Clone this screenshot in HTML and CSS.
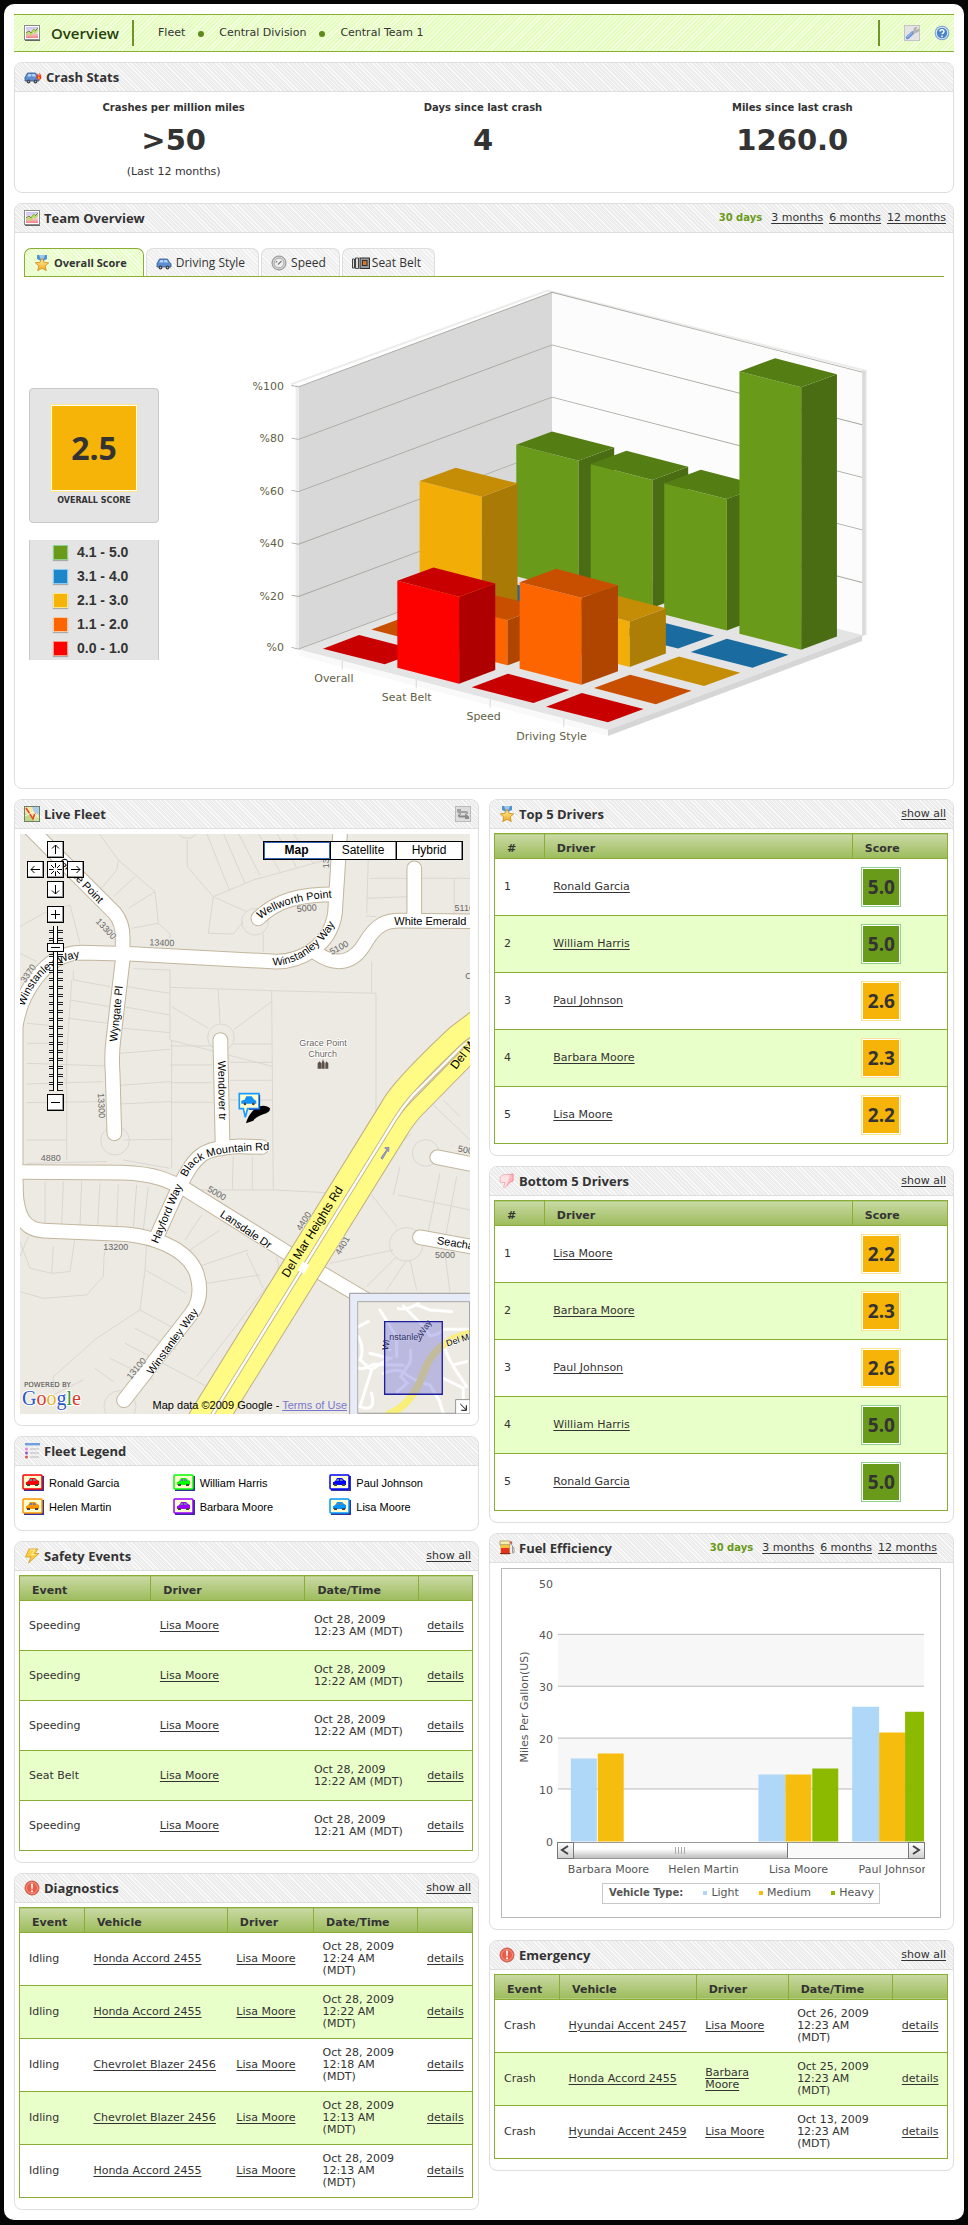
FILE: index.html
```html
<!DOCTYPE html>
<html lang="en">
<head>
<meta charset="utf-8">
<title>Fleet Overview</title>
<link rel="stylesheet" href="styles.css">
</head>
<body>
<svg class="sprite" aria-hidden="true">
  <defs>
    <linearGradient id="g-chart" x1="0" y1="0" x2="0" y2="1"><stop offset="0" stop-color="#c9c4fb"/><stop offset=".5" stop-color="#f3dcec"/><stop offset="1" stop-color="#f77f84"/></linearGradient>
    <linearGradient id="g-star" x1="0" y1="0" x2="0" y2="1"><stop offset="0" stop-color="#fff2a0"/><stop offset="1" stop-color="#f3a81c"/></linearGradient>
  </defs>
  <symbol id="i-chart" viewBox="0 0 16 16"><rect x=".5" y=".5" width="15" height="14" fill="#fff" stroke="#8a8a8a"/><rect x="2" y="2" width="12" height="11" fill="url(#g-chart)"/><path d="M2 8l3-2 2 2 3-4 1 2 3-3" fill="none" stroke="#5c8a22" stroke-width="1"/><path d="M2 10l3-2 2 2 3-5 1 3 3-3" fill="none" stroke="#b6dd5a" stroke-width="1.400"/><path d="M1 15.500h15" stroke="#666"/></symbol>
  <symbol id="i-car" viewBox="0 0 16 16"><path d="M1 8.500L3.500 4h8l2 3.500 1.500 1v3.500H1z" fill="#5b8ed0" stroke="#2d568f" stroke-width=".8"/><path d="M4.500 5h2.800v2.500H3.200zM8.200 5h2.600l1.300 2.500H8.200z" fill="#b8d4f4"/><circle cx="4.500" cy="12.500" r="1.900" fill="#444"/><circle cx="11.500" cy="12.500" r="1.900" fill="#444"/><circle cx="4.500" cy="12.500" r=".7" fill="#bbb"/><circle cx="11.500" cy="12.500" r=".7" fill="#bbb"/></symbol>
  <symbol id="i-crash" viewBox="0 0 18 16"><use href="#i-car" width="16" height="16"/><path d="M13.500 10.500c-2.500-2 0-3.500 0-6 1.500 1 1 2.500 1.500 3 .6-1 .5-3 0-4 2 1.500 3.200 5 1.500 7z" fill="#f2321a"/><path d="M14.200 10c-1-1.500.5-1.800.5-3 1 1 1.300 2 .6 3z" fill="#ffb41f"/></symbol>
  <symbol id="i-medal" viewBox="0 0 16 16"><path d="M3 0h4v6L3 4zM9 0h4v4L9 6z" fill="#4f93cf"/><path d="M5 0h6L9 5H7z" fill="#9cc6ea"/><path d="M8 3l2 4.300 4.700.500-3.500 3.100 1.100 4.700L8 13.300l-4.300 2.300 1.100-4.700L1.300 7.800 6 7.300z" fill="url(#g-star)" stroke="#c98a1d" stroke-width=".8"/></symbol>
  <symbol id="i-gauge" viewBox="0 0 16 16"><circle cx="8" cy="8" r="7" fill="#d4d4d4" stroke="#8c8c8c"/><circle cx="8" cy="8" r="4.800" fill="#efefef" stroke="#aaa"/><path d="M7 9.500l3.500-3.500M5 7.500l1-1.500" stroke="#777" stroke-width="1.100"/></symbol>
  <symbol id="i-belt" viewBox="0 0 18 16"><path d="M.5 4v9h2V4zM3.500 3v10.500h3V3z" fill="#ddd" stroke="#444"/><rect x="8" y="3" width="9.500" height="10.500" fill="#999" stroke="#333"/><rect x="10.500" y="5.500" width="4.500" height="5" fill="#d6772a" stroke="#333"/></symbol>
  <symbol id="i-map" viewBox="0 0 16 16"><rect x=".5" y=".5" width="15" height="15" fill="#f4e9a6" stroke="#6d7f6a"/><path d="M8 1h7v8L10 6z" fill="#a9cdef"/><path d="M1 7l5 3 4 5H1z" fill="#bcd98a"/><path d="M9 15l3-4 3-1v5z" fill="#cfe59e"/><path d="M2 2l7 11 2-6" fill="none" stroke="#e0492c" stroke-width="1.600"/><path d="M1 10l8-4 6 6" fill="none" stroke="#fff" stroke-width=".8"/></symbol>
  <symbol id="i-thumb" viewBox="0 0 16 16"><path d="M2 3.500C3 1.500 5 1.500 7 1.500h4l3-.5v7l-3 1-3.500 4L5.500 15l-1-.500L6 9.500H2.500C.5 9.500.8 8 1.500 7.500.5 7 .8 5.800 1.600 5.500 1 4.800 1.200 3.800 2 3.500z" fill="#ffe3e4" stroke="#f6a9b2" stroke-width=".9"/><path d="M11 1.500l3-.5v7l-3 1-3.500 4" fill="#ffb9c1" stroke="#f27f90" stroke-width=".7"/></symbol>
  <symbol id="i-fuel" viewBox="0 0 16 16"><path d="M1 1h10v4H1z" fill="#f7eeb0" stroke="#a79663" stroke-width=".8"/><path d="M2 5h8.500v9H2z" fill="#e8311c" stroke="#972" stroke-width=".6"/><path d="M2 5h8.500v3H2z" fill="#f6c43c"/><path d="M1 13.500h10.500" stroke="#8e2b1b"/><path d="M11 3l2.500 3v6c0 2 1.500 1.500 1.500 0V8l-2-2" fill="none" stroke="#999"/><path d="M11.500 1.500l1.500 2" stroke="#d33" stroke-width="1.400"/></symbol>
  <symbol id="i-list" viewBox="0 0 16 16"><path d="M1 0h15v3H1z" fill="#6f9fdc"/><path d="M1 2.500h15" stroke="#b7d0f0"/><path d="M6 6h9M6 10h9M6 14h9" stroke="#bbb"/><circle cx="2.500" cy="6" r="1.500" fill="#e486dc"/><circle cx="2.500" cy="10" r="1.500" fill="#9656cc"/><circle cx="2.500" cy="14" r="1.500" fill="#d65c4c"/></symbol>
  <symbol id="i-bolt" viewBox="0 0 16 16"><path d="M5 1h9l-3.500 4.500H15L4.500 15l2.500-6H1.500z" fill="#f8cf45" stroke="#d99f21" stroke-width=".9"/><path d="M6 2h5L7.500 6.500H11" fill="none" stroke="#fdf0a8"/></symbol>
  <symbol id="i-alert" viewBox="0 0 16 16"><circle cx="8" cy="8" r="7" fill="#ea5c47" stroke="#c9604e"/><circle cx="8" cy="8" r="5.500" fill="none" stroke="#f7a596" stroke-width=".8"/><path d="M7 3.800h2l-.4 5.400H7.400z" fill="#fff"/><circle cx="8" cy="11.300" r="1.100" fill="#fff"/></symbol>
  <symbol id="i-wrench" viewBox="0 0 16 16"><rect x=".5" y=".5" width="15" height="15" fill="#e4e4e4" stroke="#c4c4c4"/><path d="M3.500 12.500l5-4.500" stroke="#6f95d8" stroke-width="3.600" stroke-linecap="round"/><path d="M3.200 12l4.500-4" stroke="#a9c4f0" stroke-linecap="round"/><path d="M8.500 8L10.500 6C9 3.800 11 2 12.800 2.600L11.500 4l.7 1.300 1.500-.1 1-1.200C15 6.500 13.200 7.800 11.500 7L9.500 9z" fill="#bdbdbd" stroke="#999" stroke-width=".7"/></symbol>
  <symbol id="i-help" viewBox="0 0 16 16"><circle cx="8" cy="8" r="6.800" fill="#d9e7f8" stroke="#7da3d4" stroke-width="1.100"/><circle cx="8" cy="8" r="5.200" fill="#4c82c6"/><path d="M6 6.600C6 4.300 10 4.300 10 6.500 10 8 8 8 8 9.300" fill="none" stroke="#fff" stroke-width="1.500"/><circle cx="8" cy="11.300" r=".9" fill="#fff"/></symbol>
  <symbol id="i-refresh" viewBox="0 0 16 16"><rect x=".5" y=".5" width="15" height="15" fill="#dcdcdc" stroke="#bbb"/><path d="M2 3h4v2h5c2 0 2 1 2 3h-2V7H6v2L2 6z" fill="#a0a0a0"/><path d="M14 13h-4v-1.500H5c-2 0-2-1-2-3h2v1h5V7.500l4 3z" fill="#8a8a8a"/></symbol>
  <symbol id="i-tag" viewBox="0 0 22 18"><path d="M2 2h20v15H2z" fill="#33339a"/><rect x="1" y="1" width="19" height="14" rx="1" fill="#ffffcf" stroke="currentColor" stroke-width="1.500"/><path d="M4 10V8h1l2-2 1-2h5l2 2 2 1v4H4z" fill="currentColor"/><path d="M8 5h2v2H7zM11 5h2l1 2h-3z" fill="#6f7fa8"/><path d="M5 10h3v2H5zM13 10h3v2h-3z" fill="#444"/></symbol>
</svg>

<div class="page">
  <header class="topbar">
    <h1 class="topbar-title"><svg class="icon"><use href="#i-chart"/></svg>Overview</h1>
    <ol class="crumbs"><li>Fleet</li><li>Central Division</li><li>Central Team 1</li></ol>
    <div class="topbar-tools">
      <button class="icon-btn" aria-label="Settings"><svg class="icon"><use href="#i-wrench"/></svg></button>
      <button class="icon-btn" aria-label="Help"><svg class="icon"><use href="#i-help"/></svg></button>
    </div>
  </header>

  <section class="panel">
    <div class="panel-head"><h2><svg class="icon icon-wide"><use href="#i-crash"/></svg>Crash Stats</h2></div>
    <div class="stats">
      <div class="stat"><h3>Crashes per million miles</h3><strong>&gt;50</strong><p>(Last 12 months)</p></div>
      <div class="stat"><h3>Days since last crash</h3><strong>4</strong></div>
      <div class="stat"><h3>Miles since last crash</h3><strong>1260.0</strong></div>
    </div>
  </section>

  <section class="panel">
    <div class="panel-head"><h2><svg class="icon"><use href="#i-chart"/></svg>Team Overview</h2>
      <nav class="ranges"><b>30 days</b><a href="#">3 months</a><a href="#">6 months</a><a href="#">12 months</a></nav></div>
    <div class="tabs">
      <button class="tab tab-on"><svg class="icon"><use href="#i-medal"/></svg>Overall Score</button>
      <button class="tab"><svg class="icon"><use href="#i-car"/></svg>Driving Style</button>
      <button class="tab"><svg class="icon"><use href="#i-gauge"/></svg>Speed</button>
      <button class="tab tab-tight"><svg class="icon icon-wide"><use href="#i-belt"/></svg>Seat Belt</button>
    </div>
    <div class="team">
      <aside class="team-side">
        <div class="overall"><div class="overall-score">2.5</div><div class="overall-label">OVERALL SCORE</div></div>
        <ul class="bands">
          <li><i class="swatch band5"></i>4.1 - 5.0</li>
          <li><i class="swatch band4"></i>3.1 - 4.0</li>
          <li><i class="swatch band3"></i>2.1 - 3.0</li>
          <li><i class="swatch band2"></i>1.1 - 2.0</li>
          <li><i class="swatch band1"></i>0.0 - 1.0</li>
        </ul>
      </aside>
      <svg class="chart3d" viewBox="240 280 660 500" role="img" aria-label="Score distribution by category">
        <g transform="translate(240 270) scale(.4209 .3333)">
          <path d="M120 343L730 62L1486 303V1097" fill="none" stroke="#ececec" stroke-width="6"/>
          <path d="M137 350L740 67V857L137 1140z" fill="#d8d8d8"/>
          <path d="M740 67L1478 307V1097L740 857z" fill="#fcfcfc"/>
          <path d="M1478 303h8v792l-8 5z" fill="#dadada"/>
          <path d="M130 346h7v794h-7z" fill="#ececec"/>
          <path d="M137 1140L740 857L1478 1097L873 1382z" fill="#e4e4e4"/>
          <path d="M873 1382L1478 1097V1115L873 1400z" fill="#d6d6d6"/>
          <path d="M137 1140L873 1382V1400L137 1158z" fill="#f9f9f9"/>
          <path d="M120 347l17 4L740 67L1478 307M120 505l17 4L740 225L1478 465M120 662l17 4L740 382L1478 623M120 820l17 4L740 540L1478 781M120 977l17 4L740 697L1478 939M120 1134l17 5L740 857" fill="none" stroke="#a9a9a2" stroke-width="2.500"/>
          <path d="M241 1175v25M417 1232v25M593 1290v25M768 1348v25" stroke="#ccc" stroke-width="2"/>
          <path d="M655 525L803 573V970L655 920z" fill="#6a9a1a"/><path d="M803 573L888 533V930L803 970z" fill="#4a6c12"/><path d="M655 525L740 485L888 533L803 573z" fill="#547d14"/>
          <path d="M832 583L979 631V1030L832 982z" fill="#6a9a1a"/><path d="M979 631L1064 591V975L979 1015z" fill="#4a6c12"/><path d="M832 583L917 543L1064 591L979 631z" fill="#547d14"/>
          <path d="M1007 641L1156 688V1083L1007 1035z" fill="#6a9a1a"/><path d="M1156 688L1241 648V1043L1156 1083z" fill="#4a6c12"/><path d="M1007 641L1094 600L1241 648L1156 688z" fill="#547d14"/>
          <path d="M1186 305L1333 352V1141L1186 1093z" fill="#6a9a1a"/><path d="M1333 352L1418 313V1101L1333 1141z" fill="#4a6c12"/><path d="M1186 305L1271 265L1418 313L1333 352z" fill="#547d14"/>
          <path d="M1070 1148L1156 1108L1303 1156L1217 1195zM893 1091L979 1051L1126 1098L1040 1137zM540 975L626 935L773 983L687 1022z" fill="#1a6ba0"/>
          <path d="M425 634L573 681V1080L425 1030z" fill="#f2ae06"/><path d="M573 681L658 641V1035L573 1080z" fill="#a97a05"/><path d="M425 634L511 594L658 641L573 681z" fill="#c48d05"/>
          <path d="M778 1008L925 1056V1193L778 1145z" fill="#f2ae06"/><path d="M925 1056L1011 1016V1152L925 1193z" fill="#ad7e06"/><path d="M778 1008L864 968L1011 1016L925 1056zM956 1202L1042 1161L1188 1210L1102 1250z" fill="#c48d05"/>
          <path d="M487 1004L634 1052V1188L487 1140z" fill="#fd6500"/><path d="M634 1052L720 1012V1147L634 1188z" fill="#b04500"/><path d="M487 1004L573 968L720 1012L634 1052zM310 1080L396 1040L543 1088L457 1128z" fill="#c94f00"/>
          <path d="M663 938L810 985V1246L663 1198z" fill="#fd6500"/><path d="M810 985L897 947V1206L810 1246z" fill="#b04500"/><path d="M663 938L750 898L897 947L810 985zM840 1256L926 1216L1072 1264L987 1305z" fill="#c94f00"/>
          <path d="M195 1138L281 1097L428 1145L342 1185z" fill="#c90000"/>
          <path d="M372 934L519 982V1243L372 1195z" fill="#fd0000"/><path d="M519 982L605 942V1202L519 1243z" fill="#ae0000"/><path d="M372 934L458 894L605 942L519 982zM549 1254L635 1213L781 1262L696 1301zM726 1312L811 1271L958 1319L873 1359z" fill="#c90000"/>
        </g>
        <g class="axis end"><text x="283" y="390">%100</text><text x="283" y="442">%80</text><text x="283" y="495">%60</text><text x="283" y="547">%40</text><text x="283" y="600">%20</text><text x="283" y="652">%0</text></g>
        <g class="axis mid"><text x="333" y="683">Overall</text><text x="406" y="702">Seat Belt</text><text x="483" y="721">Speed</text><text x="551" y="741">Driving Style</text></g>
      </svg>
    </div>
  </section>

  <div class="columns">
    <div class="column">
      <section class="panel">
        <div class="panel-head"><h2><svg class="icon"><use href="#i-map"/></svg>Live Fleet</h2>
          <button class="icon-btn" aria-label="Refresh"><svg class="icon"><use href="#i-refresh"/></svg></button></div>
        <div class="map">
          <svg class="map-art" viewBox="20 834 450 580" role="img" aria-label="Street map">
            <defs>
              <path id="r-grace" d="M60 115L345 400Q368 430 368 470V540L340 780Q334 830 338 880L343 1060"/>
              <path id="r-winst" d="M47 1250V740C60 650 130 518 245 518L400 522L830 545C900 545 990 500 1005 400L1022 130"/>
              <path id="r-lans" d="M47 1176L370 1178C480 1182 520 1210 560 1230L880 1430L1120 1572"/>
              <path id="r-low" d="M47 1210C47 1320 80 1349 130 1352L380 1363C450 1370 560 1400 590 1480Q612 1550 575 1600L372 1861"/>
              <path id="r-hay" d="M661 780L668 1105M785 1101L720 1099C600 1105 590 1125 540 1215L470 1370"/>
              <path id="r-well" d="M775 415C830 360 900 343 1005 343"/>
              <path id="r-white" d="M950 520C1010 560 1060 550 1095 490C1130 430 1160 422 1200 422L1430 424M1243 265V420"/>
              <path id="r-east" d="M1312 1132L1430 1155M1260 1372L1430 1403"/>
              <path id="y-west" d="M1430 720L1370 765Q1200 925 1172 980L590 1922"/>
              <path id="y-east" d="M1430 802L1250 985Q1225 1010 1200 1050L658 1922"/>
              <path id="y-mid" d="M1430 765L1385 800L1235 950Q1205 985 1185 1018L626 1922"/>
              <path id="t-winst" d="M818 556C890 560 980 500 1020 400"/>
              <path id="t-left" d="M72 680C105 595 155 535 270 530"/>
              <path id="t-well" d="M780 418C840 372 910 358 1010 352"/>
              <path id="t-black" d="M560 1192C587 1128 640 1115 820 1110"/>
            </defs>
            <rect x="20" y="834" width="450" height="580" fill="#edeae3"/>
            <g transform="translate(0 780) scale(.3333)">
              <g class="parcels">
                <path d="M290 150L355 240L350 270L300 330M355 240L465 335L475 430L510 462V480M405 290L340 350M465 335L385 385M475 430L395 445M60 440L130 400L210 375L240 490M60 520L110 545M562 180V260L640 350L760 300L870 270L985 238M640 350L625 460L700 462L730 425M620 160L690 335M670 160L735 310M715 160L780 285M775 160L840 275M830 160L890 262M880 160L940 250M640 350L740 395M790 460V515M1105 240L1100 400M1110 295H1410M1100 355L1225 350M1363 293V405M1130 410L1098 408M400 566L510 570V780L820 860M510 622L815 632L1128 640V1050M1115 545V637M655 630L660 730M815 665L700 750M515 680L625 745M510 798H640M700 792H815M510 855H635M690 847H815M510 908H635M690 901H815M510 967H640M690 960H815M815 632L820 1230M515 780V1165M370 680L510 705M380 620L510 640M370 745L510 758M360 820L510 808M360 916L510 905M360 972L510 965M370 1080L515 1078M220 570V600L330 620M215 600L200 830V1140M210 660L330 680M205 715L325 730M80 730L190 740M80 790H200M80 850L320 858M80 912L310 905M80 968L310 965M80 1080H200"/>
                <path d="M80 1150L320 1145M370 1140L510 1165M135 1205V1330M190 1205L185 1333M245 1205L240 1335M300 1210L293 1338M355 1212L350 1340M410 1215L400 1343M445 1220L430 1350M60 1385L90 1465L155 1480L210 1475L225 1375M60 1535L130 1555L260 1545L310 1490L312 1430L320 1385M160 1400L155 1480M85 1370L60 1430M700 1130L697 1230M757 1130V1230M590 1230H820L1110 1245M605 1305L555 1380M660 1350L570 1410M745 1410L595 1460M780 1485L620 1510M440 1390L435 1470L560 1540M435 1470L420 1590L550 1660M405 1645L530 1710M375 1690L640 1830M330 1735L460 1800M420 1590L290 1675L160 1790V1830M285 1765L340 1805M250 1800L150 1850M790 1525L740 1420M830 1430Q850 1480 800 1520L590 1790M1330 960L1380 1010M1235 1060L1180 1110M1300 975L1410 1080M1115 1245L1190 1340M1195 1245L1410 1290M1320 1180L1280 1380M1370 1190L1335 1380M1200 1160L1180 1245M990 1450L1180 1410M1100 1520L1190 1430M1160 1530L1220 1440M1250 1530L1230 1440M1350 1535L1335 1420M150 845L200 905"/>
                <circle cx="562" cy="140" r="35"/><circle cx="765" cy="425" r="40"/><circle cx="663" cy="772" r="40"/><circle cx="345" cy="1082" r="43"/><circle cx="1277" cy="1119" r="40"/><circle cx="1219" cy="1393" r="50"/><circle cx="360" cy="1880" r="48"/>
              </g>
              <g class="edge"><use href="#r-grace"/><use href="#r-winst"/><use href="#r-lans"/><use href="#r-low"/><use href="#r-hay"/><use href="#r-well"/><use href="#r-white"/><use href="#r-east"/></g>
              <g class="road"><use href="#r-grace"/><use href="#r-winst"/><use href="#r-lans"/><use href="#r-low"/><use href="#r-hay"/><use href="#r-well"/><use href="#r-white"/><use href="#r-east"/></g>
              <g class="main-edge"><use href="#y-west"/><use href="#y-east" stroke-width="54"/></g>
              <g class="main-road"><use href="#y-west" stroke-width="57"/><use href="#y-east" stroke-width="48"/></g>
              <use class="mid-edge" href="#y-mid"/>
              <use class="mid-gap" href="#y-mid"/>
              <path d="M893 1471l15-26 20 10-16 27z" fill="#fff"/>
              <path d="M1143 1134l18-26-7-4 13-2-1 13-4-3-15 26z" fill="#99c" stroke="#8a8ab4" stroke-width="3"/>
              <g class="number">
                <text x="448" y="496" transform="rotate(2 448 496)">13400</text>
                <text transform="translate(286 425) rotate(47)">13300</text>
                <text transform="translate(75 610) rotate(-55)">3370</text>
                <text x="891" y="396" transform="rotate(-5 891 396)">5000</text>
                <text transform="translate(995 525) rotate(-28)">5100</text>
                <text x="1364" y="394">5116</text>
                <text transform="translate(987 265) rotate(-90)">13</text>
                <text transform="translate(293 940) rotate(87)">13300</text>
                <text x="122" y="1144">4880</text><text x="310" y="1411">13200</text>
                <text transform="translate(620 1232) rotate(31)">5000</text>
                <text transform="translate(903 1354) rotate(-58)">4400</text>
                <text transform="translate(1020 1427) rotate(-60)">4401</text>
                <text transform="translate(392 1800) rotate(-50)">13100</text>
                <text x="1373" y="1115" transform="rotate(9 1373 1115)">5000</text>
                <text x="1305" y="1433">5000</text><text x="1396" y="598">C</text>
              </g>
              <g class="street">
                <text transform="translate(176 247) rotate(46)">Grace Point</text>
                <text><textPath href="#t-left">Winstanley Way</textPath></text>
                <text><textPath href="#t-winst">Winstanley Way</textPath></text>
                <text><textPath href="#t-well">Wellworth Point</textPath></text>
                <text x="1183" y="435">White Emerald</text>
                <text transform="translate(351 786) rotate(-84)">Wyngate Pl</text>
                <text transform="translate(654 842) rotate(89)">Wendover tr</text>
                <text><textPath href="#t-black">Black Mountain Rd</textPath></text>
                <text transform="translate(473 1392) rotate(-67)">Hayford Way</text>
                <text transform="translate(658 1308) rotate(34)">Lansdale Dr</text>
                <text transform="translate(457 1786) rotate(-54)">Winstanley Way</text>
                <text x="1310" y="1392" transform="rotate(9 1310 1392)">Seachase</text>
              </g>
              <g class="avenue">
                <text transform="translate(864 1495) rotate(-58)">Del Mar Heights Rd</text>
                <text transform="translate(1368 870) rotate(-52)">Del Mar</text>
              </g>
              <g class="place"><text x="969" y="798">Grace Point</text><text x="968" y="831">Church</text></g>
              <path d="M953 866V850l6-6 5 6v16zM965 866V850l4-12 5 12v16zM976 866V850l3-6 6 6v16z" fill="#5c5048"/>
              <path d="M738 1030C750 985 790 965 810 985C812 1005 775 1000 760 1022z" fill="#000"/>
              <path d="M718 941h59v45h-34l-7 26-6-26h-12z" fill="#ffffcf" stroke="#189cff" stroke-width="5"/>
              <path d="M779 945v43h-32" fill="none" stroke="#223b9a" stroke-width="3"/>
              <path d="M724 971v-9l10-3 5-10h16l8 10 6 3v9z" fill="#1590f5"/><circle cx="735" cy="972" r="4" fill="#444"/><circle cx="760" cy="972" r="4" fill="#444"/>
              <path d="M1049 1540h370v370h-370z" fill="#e6ebf7" stroke="#979797" stroke-width="3"/>
              <svg x="1072" y="1564" width="338" height="338" viewBox="1072 1564 338 338">
                <path d="M1072 1564h338v338h-338z" fill="#edeae3"/>
                <path class="mini" d="M1195 1586q30 5 60-16M1210 1578q30 30 60 60l20 30q30-5 40-20h80M1250 1575l40 15 65 5M1075 1640l30-15M1140 1590l50 80v60M1075 1670q20 40 5 70l35 30-35 110q50 20 35-40M1075 1765q20 5 45-12l90 3M1110 1720l60 15-50 30M1150 1700l20 10M1232 1710v35l-30 45 20 20-30 25M1150 1780q50-20 70 5q30 20 70 30l30 50M1330 1690q20 60 30 65l40-10M1330 1795l60 30v40M1360 1760l40 60M1320 1870l10 30"/>
                <path d="M1160 1905Q1235 1880 1270 1780T1415 1660" fill="none" stroke="#f8ee78" stroke-width="22"/>
                <g class="mini-label"><text transform="translate(1342 1700) rotate(-18)">Del Mar</text><text x="1168" y="1681">nstanley</text><text transform="translate(1268 1672) rotate(-58)">Way</text><text transform="translate(1164 1712) rotate(-80)">Wi</text></g>
                <path d="M1154 1625h173v218h-173z" fill="#6868d8" fill-opacity=".38" stroke="#1d1d9c" stroke-width="4"/>
                <path d="M1073 1565h336v335h-336z" fill="none" stroke="#979797" stroke-width="3"/>
                <path d="M1367 1859h43v43h-43z" fill="#fff" stroke="#979797" stroke-width="3"/><path d="M1381 1872l18 18M1399 1876v15h-15" fill="none" stroke="#000" stroke-width="3"/>
              </svg>
            </g>
            <text class="powered" x="24" y="1387">POWERED BY</text>
            <text class="google" x="22" y="1405"><tspan fill="#2a56c6">G</tspan><tspan fill="#d8382b">o</tspan><tspan fill="#e8b31e">o</tspan><tspan fill="#2a56c6">g</tspan><tspan fill="#2c9a3c">l</tspan><tspan fill="#d8382b">e</tspan></text>
          </svg>
          <div class="map-nav">
            <div class="pan">
              <button class="nav-btn pan-up" aria-label="Pan up"><svg viewBox="0 0 13 13"><path d="M6.500 11V2M3 5.500L6.500 2L10 5.500"/></svg></button>
              <button class="nav-btn pan-left" aria-label="Pan left"><svg viewBox="0 0 13 13"><path d="M11 6.500H2M5.500 3L2 6.500L5.500 10"/></svg></button>
              <button class="nav-btn pan-home" aria-label="Recenter"><svg viewBox="0 0 13 13"><path d="M6.500 0v4.500M6.500 13V8.500M0 6.500h4.500M13 6.500H8.500M2 2l3 3M11 2L8 5M2 11l3-3M11 11L8 8"/></svg></button>
              <button class="nav-btn pan-right" aria-label="Pan right"><svg viewBox="0 0 13 13"><path d="M2 6.500h9M7.500 3L11 6.500L7.500 10"/></svg></button>
              <button class="nav-btn pan-down" aria-label="Pan down"><svg viewBox="0 0 13 13"><path d="M6.500 2v9M3 7.500L6.500 11L10 7.500"/></svg></button>
            </div>
            <button class="nav-btn" aria-label="Zoom in"><svg viewBox="0 0 13 13"><path d="M6.500 2v9M2 6.500h9"/></svg></button>
            <input class="zoom" type="range" min="0" max="100" value="11" aria-label="Zoom level">
            <button class="nav-btn" aria-label="Zoom out"><svg viewBox="0 0 13 13"><path d="M2 6.500h9"/></svg></button>
          </div>
          <div class="map-types"><button class="type-on">Map</button><button>Satellite</button><button>Hybrid</button></div>
          <div class="map-credit">Map data ©2009 Google - <a href="#">Terms of Use</a></div>
        </div>
      </section>

      <section class="panel">
        <div class="panel-head"><h2><svg class="icon"><use href="#i-list"/></svg>Fleet Legend</h2></div>
        <ul class="fleet">
          <li><svg class="tag c-red"><use href="#i-tag"/></svg>Ronald Garcia</li>
          <li><svg class="tag c-green"><use href="#i-tag"/></svg>William Harris</li>
          <li><svg class="tag c-blue"><use href="#i-tag"/></svg>Paul Johnson</li>
          <li><svg class="tag c-orange"><use href="#i-tag"/></svg>Helen Martin</li>
          <li><svg class="tag c-purple"><use href="#i-tag"/></svg>Barbara Moore</li>
          <li><svg class="tag c-sky"><use href="#i-tag"/></svg>Lisa Moore</li>
        </ul>
      </section>

      <section class="panel">
        <div class="panel-head"><h2><svg class="icon"><use href="#i-bolt"/></svg>Safety Events</h2><a href="#">show all</a></div>
        <table class="grid rows-mid">
          <colgroup><col class="w29"><col class="w34"><col class="w25"><col class="w12"></colgroup>
          <thead><tr><th>Event</th><th>Driver</th><th>Date/Time</th><th></th></tr></thead>
          <tbody>
            <tr><td>Speeding</td><td><a href="#">Lisa Moore</a></td><td>Oct 28, 2009<br>12:23 AM (MDT)</td><td><a href="#">details</a></td></tr>
            <tr><td>Speeding</td><td><a href="#">Lisa Moore</a></td><td>Oct 28, 2009<br>12:22 AM (MDT)</td><td><a href="#">details</a></td></tr>
            <tr><td>Speeding</td><td><a href="#">Lisa Moore</a></td><td>Oct 28, 2009<br>12:22 AM (MDT)</td><td><a href="#">details</a></td></tr>
            <tr><td>Seat Belt</td><td><a href="#">Lisa Moore</a></td><td>Oct 28, 2009<br>12:22 AM (MDT)</td><td><a href="#">details</a></td></tr>
            <tr><td>Speeding</td><td><a href="#">Lisa Moore</a></td><td>Oct 28, 2009<br>12:21 AM (MDT)</td><td><a href="#">details</a></td></tr>
          </tbody>
        </table>
      </section>

      <section class="panel">
        <div class="panel-head"><h2><svg class="icon"><use href="#i-alert"/></svg>Diagnostics</h2><a href="#">show all</a></div>
        <table class="grid rows-std">
          <colgroup><col class="w14"><col class="w32"><col class="w19"><col class="w23"><col class="w12"></colgroup>
          <thead><tr><th>Event</th><th>Vehicle</th><th>Driver</th><th>Date/Time</th><th></th></tr></thead>
          <tbody>
            <tr><td>Idling</td><td><a href="#">Honda Accord 2455</a></td><td><a href="#">Lisa Moore</a></td><td>Oct 28, 2009<br>12:24 AM<br>(MDT)</td><td><a href="#">details</a></td></tr>
            <tr><td>Idling</td><td><a href="#">Honda Accord 2455</a></td><td><a href="#">Lisa Moore</a></td><td>Oct 28, 2009<br>12:22 AM<br>(MDT)</td><td><a href="#">details</a></td></tr>
            <tr><td>Idling</td><td><a href="#">Chevrolet Blazer 2456</a></td><td><a href="#">Lisa Moore</a></td><td>Oct 28, 2009<br>12:18 AM<br>(MDT)</td><td><a href="#">details</a></td></tr>
            <tr><td>Idling</td><td><a href="#">Chevrolet Blazer 2456</a></td><td><a href="#">Lisa Moore</a></td><td>Oct 28, 2009<br>12:13 AM<br>(MDT)</td><td><a href="#">details</a></td></tr>
            <tr><td>Idling</td><td><a href="#">Honda Accord 2455</a></td><td><a href="#">Lisa Moore</a></td><td>Oct 28, 2009<br>12:13 AM<br>(MDT)</td><td><a href="#">details</a></td></tr>
          </tbody>
        </table>
      </section>
    </div>

    <div class="column">
      <section class="panel">
        <div class="panel-head"><h2><svg class="icon"><use href="#i-medal"/></svg>Top 5 Drivers</h2><a href="#">show all</a></div>
        <table class="grid rows-tall">
          <colgroup><col class="w11"><col class="w68"><col class="w21"></colgroup>
          <thead><tr><th>#</th><th>Driver</th><th>Score</th></tr></thead>
          <tbody>
            <tr><td>1</td><td><a href="#">Ronald Garcia</a></td><td><span class="score good">5.0</span></td></tr>
            <tr><td>2</td><td><a href="#">William Harris</a></td><td><span class="score good">5.0</span></td></tr>
            <tr><td>3</td><td><a href="#">Paul Johnson</a></td><td><span class="score">2.6</span></td></tr>
            <tr><td>4</td><td><a href="#">Barbara Moore</a></td><td><span class="score">2.3</span></td></tr>
            <tr><td>5</td><td><a href="#">Lisa Moore</a></td><td><span class="score">2.2</span></td></tr>
          </tbody>
        </table>
      </section>

      <section class="panel">
        <div class="panel-head"><h2><svg class="icon"><use href="#i-thumb"/></svg>Bottom 5 Drivers</h2><a href="#">show all</a></div>
        <table class="grid rows-tall">
          <colgroup><col class="w11"><col class="w68"><col class="w21"></colgroup>
          <thead><tr><th>#</th><th>Driver</th><th>Score</th></tr></thead>
          <tbody>
            <tr><td>1</td><td><a href="#">Lisa Moore</a></td><td><span class="score">2.2</span></td></tr>
            <tr><td>2</td><td><a href="#">Barbara Moore</a></td><td><span class="score">2.3</span></td></tr>
            <tr><td>3</td><td><a href="#">Paul Johnson</a></td><td><span class="score">2.6</span></td></tr>
            <tr><td>4</td><td><a href="#">William Harris</a></td><td><span class="score good">5.0</span></td></tr>
            <tr><td>5</td><td><a href="#">Ronald Garcia</a></td><td><span class="score good">5.0</span></td></tr>
          </tbody>
        </table>
      </section>

      <section class="panel">
        <div class="panel-head head-inset"><h2><svg class="icon"><use href="#i-fuel"/></svg>Fuel Efficiency</h2>
          <nav class="ranges"><b>30 days</b><a href="#">3 months</a><a href="#">6 months</a><a href="#">12 months</a></nav></div>
        <div class="fuel">
          <svg class="fuel-plot" viewBox="502 1569 439 273" role="img" aria-label="Miles per gallon by driver and vehicle type">
            <path d="M558 1635h367v52H558zM558 1738h367v52H558z" fill="#f7f7f7"/>
            <path d="M558 1634.500h367M558 1686.500h367M558 1738.500h367M558 1789.500h367" stroke="#bdbdbd"/>
            <path d="M571 1759h26v83h-26zM759 1775h27v67h-27zM853 1707h27v135h-27z" fill="#afd8f8"/>
            <path d="M598 1754h26v88h-26zM786 1775h26v67h-26zM880 1733h26v109h-26z" fill="#f6bd0f"/>
            <path d="M813 1769h26v73h-26zM906 1712h19v130h-19z" fill="#8bba00"/>
            <g class="fuel-axis"><text x="553" y="1588">50</text><text x="553" y="1639">40</text><text x="553" y="1691">30</text><text x="553" y="1743">20</text><text x="553" y="1795">10</text><text x="553" y="1847">0</text></g>
            <text class="fuel-title" transform="translate(528 1763) rotate(-90)">Miles Per Gallon(US)</text>
          </svg>
          <div class="scroller">
            <button class="scroll-btn" aria-label="Scroll left"><svg viewBox="0 0 14 14"><path d="M10 3L4 7l6 4"/></svg></button>
            <div class="scroll-track"><button class="scroll-thumb" aria-label="Scroll position"><i class="grip"></i></button></div>
            <button class="scroll-btn" aria-label="Scroll right"><svg viewBox="0 0 14 14"><path d="M4 3l6 4l-6 4"/></svg></button>
          </div>
          <div class="fuel-names"><span>Barbara Moore</span><span>Helen Martin</span><span>Lisa Moore</span><span>Paul Johnson</span></div>
          <div class="fuel-key">
            <div class="fuel-legend"><b>Vehicle Type:</b><span><i class="dot light"></i>Light</span><span><i class="dot medium"></i>Medium</span><span><i class="dot heavy"></i>Heavy</span></div>
          </div>
        </div>
      </section>

      <section class="panel">
        <div class="panel-head"><h2><svg class="icon"><use href="#i-alert"/></svg>Emergency</h2><a href="#">show all</a></div>
        <table class="grid rows-std">
          <colgroup><col class="w14"><col class="w30"><col class="w20"><col class="w23"><col class="w12"></colgroup>
          <thead><tr><th>Event</th><th>Vehicle</th><th>Driver</th><th>Date/Time</th><th></th></tr></thead>
          <tbody>
            <tr><td>Crash</td><td><a href="#">Hyundai Accent 2457</a></td><td><a href="#">Lisa Moore</a></td><td>Oct 26, 2009<br>12:23 AM<br>(MDT)</td><td><a href="#">details</a></td></tr>
            <tr><td>Crash</td><td><a href="#">Honda Accord 2455</a></td><td><a href="#">Barbara Moore</a></td><td>Oct 25, 2009<br>12:23 AM<br>(MDT)</td><td><a href="#">details</a></td></tr>
            <tr><td>Crash</td><td><a href="#">Hyundai Accent 2459</a></td><td><a href="#">Lisa Moore</a></td><td>Oct 13, 2009<br>12:23 AM<br>(MDT)</td><td><a href="#">details</a></td></tr>
          </tbody>
        </table>
      </section>
    </div>
  </div>
</div>
</body>
</html>
```
FILE: styles.css
```css
* { box-sizing: border-box; }

body {
  margin: 0;
  padding: 4px 4px 5px;
  background: #070606;
  color: #333;
  font: 11px/12px "DejaVu Sans", Verdana, sans-serif;
}

a { color: inherit; text-underline-offset: 2px; }
h1, h2, h3, p, ul, ol { margin: 0; padding: 0; font-weight: normal; }
ul, ol { list-style: none; }
button { padding: 0; border: 0; background: none; color: inherit; font: inherit; }

.sprite { position: absolute; width: 0; height: 0; }

.page {
  display: flex;
  flex-direction: column;
  gap: 10px;
  padding: 10px;
  border-radius: 10px;
  background: #fff;
}

.icon { display: block; width: 16px; height: 16px; flex: none; }
.icon-wide { width: 18px; }
.icon-btn { display: block; cursor: pointer; }

/* Top bar */
.topbar {
  display: flex;
  align-items: center;
  height: 38px;
  padding: 0 4px 0 10px;
  border: solid #8aad35;
  border-width: 1px 0;
  background: repeating-linear-gradient(135deg, #e5fdc0 0 2px, #f4ffe4 2px 3px);
}
.topbar-title {
  display: flex;
  align-items: center;
  gap: 11px;
  height: 26px;
  padding-right: 13px;
  border-right: 2px solid #6f9526;
  color: #27400a;
  font: 600 15px/20px "Open Sans", "Noto Sans", sans-serif;
}
.crumbs { display: flex; margin-left: 24px; }
.crumbs li { display: flex; align-items: center; }
.crumbs li + li::before {
  content: "";
  width: 6px;
  height: 6px;
  margin: 2px 15px 0 13px;
  border-radius: 3px;
  background: #5c8a1c;
}
.topbar-tools {
  display: flex;
  align-items: center;
  gap: 14px;
  height: 26px;
  margin-left: auto;
  padding-left: 24px;
  border-left: 2px solid #6f9526;
}

/* Panels */
.panel {
  border: 1px solid #dedede;
  border-radius: 8px;
  background: #fff;
  overflow: hidden;
}
.panel-head {
  display: flex;
  align-items: center;
  justify-content: space-between;
  height: 29px;
  padding: 0 7px 0 9px;
  border-bottom: 1px solid #dedede;
  background: repeating-linear-gradient(45deg, #ececec 0 2px, #fafafa 2px 3px);
}
.head-inset { padding-right: 16px; }
.panel-head h2 {
  display: flex;
  align-items: center;
  gap: 4px;
  font: bold 13px/18px "Open Sans", "Noto Sans", sans-serif;
}
.ranges { display: flex; gap: 6px; }
.ranges b { margin-right: 3px; color: #6a9a1a; font-size: 10px; }

/* Crash stats */
.stats {
  display: grid;
  grid-template-columns: repeat(3, 1fr);
  height: 100px;
  padding: 10px 6px 0 4px;
  text-align: center;
}
.stats h3 { font-size: 10px; font-weight: bold; }
.stats strong { display: block; padding: 10px 0; font-size: 29px; line-height: 32px; }

/* Tabs */
.tabs {
  display: flex;
  gap: 2px;
  margin: 15px 9px 0;
  border-bottom: 1px solid #8aad35;
}
.tab {
  display: flex;
  align-items: center;
  gap: 4px;
  height: 28px;
  padding: 0 13px 0 9px;
  border: 1px solid #dedede;
  border-bottom: 0;
  border-radius: 7px 7px 0 0;
  background: repeating-linear-gradient(45deg, #efefef 0 2px, #fafafa 2px 3px);
  font: 12px/16px "Open Sans", "Noto Sans", sans-serif;
  cursor: pointer;
}
.tab-tight { gap: 2px; }
.tab-on {
  padding-right: 16px;
  border-color: #8aad35;
  background: repeating-linear-gradient(45deg, #e8fdc8 0 2px, #f6ffe9 2px 3px);
  font-weight: bold;
  font-size: 11px;
}

/* Team overview */
.team { display: flex; align-items: flex-start; padding: 3px 53px 9px 14px; }
.team-side { flex: none; width: 130px; padding-top: 108px; }
.overall {
  height: 135px;
  padding-top: 15px;
  border: 1px solid #c9c9c9;
  border-radius: 4px;
  background: #e4e4e4;
  text-align: center;
}
.overall-score {
  width: 88px;
  height: 88px;
  margin: 0 auto;
  border: 1px solid #fde58f;
  outline: 1px solid #fff;
  outline-offset: -2px;
  background: #f6b308;
  font: bold 32px/86px "Open Sans", "Noto Sans", sans-serif;
}
.overall-label { padding-top: 4px; font-size: 8px; font-weight: bold; line-height: 10px; }
.bands {
  margin-top: 17px;
  border: solid #c9c9c9;
  border-width: 0 1px;
  background: #e4e4e4;
}
.bands li {
  display: flex;
  align-items: center;
  gap: 9px;
  height: 24px;
  padding-left: 23px;
  font: bold 14px/16px "Liberation Sans", Arial, sans-serif;
}
.swatch { width: 15px; height: 15px; border: 1px solid; box-shadow: 0 1px 1px #aaa; }
.band5 { background: #6a9a1a; border-color: #8fd08f; }
.band4 { background: #1c86c8; border-color: #8bcaf2; }
.band3 { background: #f6b308; border-color: #fde88c; }
.band2 { background: #fd6500; border-color: #fdc9a0; }
.band1 { background: #fd0000; border-color: #f59a80; }
.chart3d { display: block; flex: 1; min-width: 0; margin-left: 82px; }
.axis { fill: #5f5f45; font-size: 11px; }
.end { text-anchor: end; }
.mid { text-anchor: middle; }

/* Two-column area */
.columns { display: grid; grid-template-columns: 1fr 1fr; gap: 10px; align-items: start; }
.column { display: flex; flex-direction: column; gap: 10px; min-width: 0; }

/* Map */
.map { position: relative; margin: 5px 8px 11px 5px; }
.map-art { display: block; width: 100%; }
.parcels { fill: none; stroke: #dad7d3; stroke-width: 3; }
.edge, .road { fill: none; stroke-linecap: round; stroke-linejoin: round; }
.edge { stroke: #c2b69c; stroke-width: 47; }
.road { stroke: #fff; stroke-width: 41; }
.main-edge, .main-road, .mid-edge, .mid-gap { fill: none; }
.main-edge { stroke: #bfae84; stroke-width: 63; }
.main-road { stroke: #fffb84; }
.mid-edge { stroke: #c9bb8c; stroke-width: 13; }
.mid-gap { stroke: #fff; stroke-width: 7; }
.street text, .avenue text, .number text, .place text, .mini-label text {
  font-family: "Liberation Sans", Arial, sans-serif;
  paint-order: stroke;
}
.street text { font-size: 33px; stroke: #fff; stroke-width: 5px; }
.avenue text { font-size: 36px; stroke: #fffb84; stroke-width: 5px; }
.number text { font-size: 27px; fill: #666; stroke: #edeae3; stroke-width: 4px; }
.place text { font-size: 27px; fill: #6b6460; stroke: #fff; stroke-width: 5px; text-anchor: middle; }
.mini { fill: none; stroke: #fff; stroke-width: 9; stroke-linecap: round; }
.mini-label text { font-size: 27px; stroke: #fff; stroke-width: 3px; }
.powered { font: 7px "DejaVu Sans", sans-serif; fill: #444; }
.google { font: 20px "Liberation Serif", serif; paint-order: stroke; stroke: #fff; stroke-width: 2px; }

.map-nav {
  position: absolute;
  top: 7px;
  left: 7px;
  display: flex;
  flex-direction: column;
  align-items: center;
  gap: 3px;
}
.pan {
  display: grid;
  grid-template: "a up b" 17px "left home right" 17px "c down d" 17px / 17px 17px 17px;
  gap: 3px;
  margin-bottom: 5px;
}
.pan-up { grid-area: up; }
.pan-left { grid-area: left; }
.pan-home { grid-area: home; }
.pan-right { grid-area: right; }
.pan-down { grid-area: down; }
.nav-btn { width: 17px; height: 17px; border: 1px solid #000; box-shadow: inset -1px -1px #999; background: #fff; }
.nav-btn svg { display: block; width: 13px; height: 13px; margin: 1px; fill: none; stroke: #000; }
.zoom {
  appearance: none;
  writing-mode: vertical-lr;
  width: 17px;
  height: 165px;
  margin: 0;
  background:
    linear-gradient(90deg, #000 0 1px, #fff 1px 4px, #000 4px 5px) center / 5px 100% no-repeat,
    repeating-linear-gradient(#0000 0 4px, #222 4px 5px, #eee 5px 6px, #222 6px 7px, #0000 7px 8px) center / 14px 100% no-repeat;
}
.zoom::-webkit-slider-thumb {
  appearance: none;
  width: 17px;
  height: 9px;
  border: 1px solid #000;
  background: linear-gradient(#000, #000) center / 9px 1px no-repeat #fff;
}
.map-types { position: absolute; top: 7px; right: 7px; display: flex; border: 1px solid #000; }
.map-types button {
  width: 66px;
  height: 17px;
  border-right: 1px solid #888;
  background: #fff;
  color: #000;
  font: 12px/15px "Liberation Sans", Arial, sans-serif;
}
.map-types button + button { border-left: 1px solid #000; }
.map-types .type-on { outline: 1px solid #3465b4; outline-offset: -1px; font-weight: bold; }
.map-credit {
  position: absolute;
  right: 123px;
  bottom: 2px;
  color: #000;
  font: 11px/13px "Liberation Sans", Arial, sans-serif;
}
.map-credit a { color: #7777cc; text-underline-offset: auto; }

/* Fleet legend */
.fleet {
  display: grid;
  grid-template-columns: 151fr 157fr 149fr;
  row-gap: 6px;
  padding: 8px 0 14px 7px;
}
.fleet li {
  display: flex;
  align-items: center;
  gap: 5px;
  color: #000;
  font: 11px/18px "Liberation Sans", Arial, sans-serif;
}
.tag { display: block; width: 22px; height: 18px; }
.c-red { color: #f00; }
.c-green { color: #0f0; }
.c-blue { color: #00f; }
.c-orange { color: #ff9500; }
.c-purple { color: #90f; }
.c-sky { color: #0095ff; }

/* Tables */
.grid {
  width: calc(100% - 9px);
  margin: 4px 5px 11px 4px;
  border: 1px solid #8aad35;
  border-collapse: collapse;
  table-layout: fixed;
}
.grid th {
  height: 25px;
  padding: 6px 0 0 12px;
  border: 1px solid #8aad35;
  background: linear-gradient(#c9d9a4, #9dbc5c);
  text-align: left;
}
.grid td { padding: 8px 6px 8px 9px; border-bottom: 1px solid #8aad35; }
.grid tbody tr:nth-child(even) { background: #e9ffc9; }
.rows-mid td { height: 50px; }
.rows-std td { height: 53px; }
.rows-tall td { height: 57px; }
.w11 { width: 11%; }
.w12 { width: 12%; }
.w14 { width: 14.3%; }
.w19 { width: 19%; }
.w20 { width: 20.2%; }
.w21 { width: 21%; }
.w23 { width: 23%; }
.w25 { width: 25%; }
.w29 { width: 29%; }
.w30 { width: 30%; }
.w32 { width: 31.5%; }
.w34 { width: 34%; }
.w68 { width: 68%; }
.score {
  display: block;
  width: 40px;
  height: 40px;
  border: 1px solid #fde58f;
  outline: 1px solid #fff;
  outline-offset: -2px;
  background: #f6b308;
  font: bold 19px/38px "Open Sans", "Noto Sans", sans-serif;
  text-align: center;
}
.good { border-color: #8fcf8f; background: #6a9a1a; }

/* Fuel chart */
.fuel { margin: 5px 12px 11px 11px; border: 1px solid #b8b8b8; padding-bottom: 13px; }
.fuel-plot { display: block; width: 100%; overflow: visible; }
.fuel-axis, .fuel-title { fill: #555; font-size: 11px; }
.fuel-axis { text-anchor: end; }
.scroller { display: flex; height: 17px; margin: 0 15px 0 55px; }
.scroll-btn { width: 17px; border: 1px solid #777; background: linear-gradient(#fff, #d0d0d0); }
.scroll-btn svg { display: block; width: 14px; height: 14px; fill: none; stroke: #444; stroke-width: 2; }
.scroll-track { flex: 1; border: solid #999; border-width: 1px 0; background: #fafafa; }
.scroll-thumb {
  display: flex;
  align-items: center;
  justify-content: center;
  width: 64%;
  height: 15px;
  border-right: 1px solid #777;
  background: linear-gradient(#fff 40%, #bdbdbd);
}
.grip { width: 10px; height: 7px; background: repeating-linear-gradient(90deg, #aaa 0 1px, #0000 1px 3px); }
.fuel-names { display: flex; margin: 5px 15px 7px 59px; overflow: hidden; color: #555; }
.fuel-names span { flex: 0 0 95px; text-align: center; white-space: nowrap; }
.fuel-key { display: flex; justify-content: center; padding: 0 15px 0 55px; }
.fuel-legend {
  display: flex;
  align-items: center;
  justify-content: space-between;
  width: 278px;
  height: 21px;
  padding: 0 5px 0 6px;
  border: 1px solid #c8c8c8;
  color: #555;
}
.fuel-legend b { font-size: 10px; }
.fuel-legend span { display: flex; align-items: center; gap: 4px; }
.dot { width: 4px; height: 4px; }
.light { background: #afd8f8; }
.medium { background: #f6bd0f; }
.heavy { background: #8bba00; }
```
